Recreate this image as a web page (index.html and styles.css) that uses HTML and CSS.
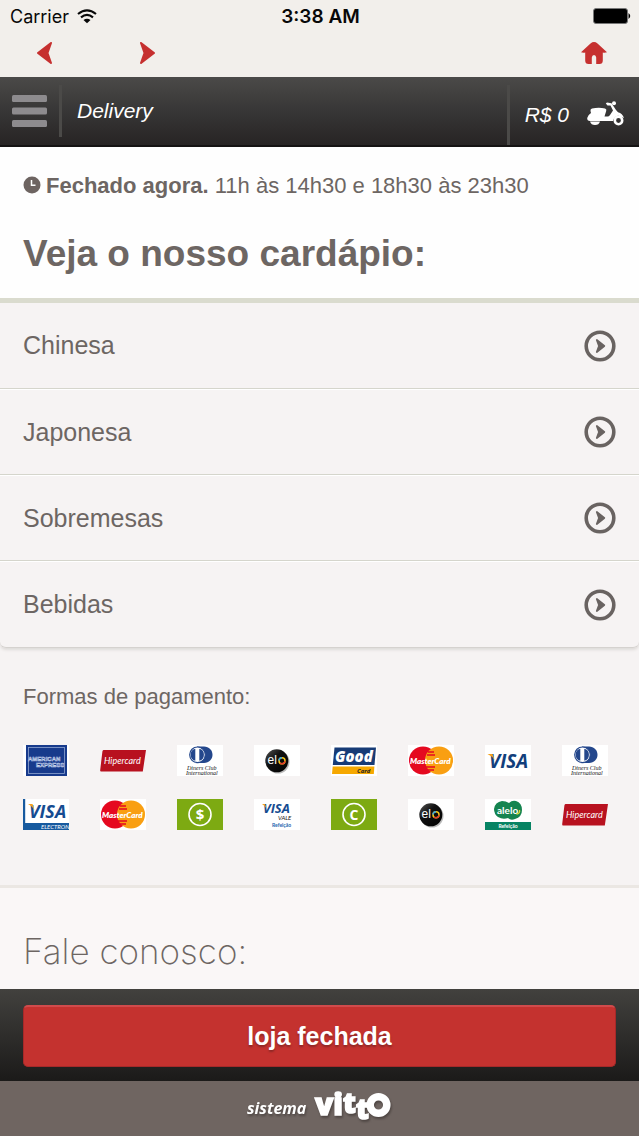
FILE: index.html
```html
<!DOCTYPE html>
<html lang="pt-BR">
<head>
<meta charset="utf-8">
<meta name="viewport" content="width=device-width, initial-scale=1">
<title>Delivery</title>
<link rel="stylesheet" href="styles.css">
</head>
<body>
<header class="browser">
  <div class="status">
    <span class="carrier">Carrier
      <svg width="20" height="15" viewBox="0 0 20 15" aria-hidden="true"><g fill="none" stroke="#080808" stroke-width="2.2"><path d="M1 5Q10-2.2 19 5"/><path d="M4 8.3Q10 3.6 16 8.3"/></g><path d="M6.500 11Q10 8.400 13.500 11L10 14.300Z" fill="#080808"/></svg>
    </span>
    <time>3:38 AM</time>
    <svg class="battery" width="38" height="16" viewBox="0 0 38 16" role="img" aria-label="Bateria"><rect x=".5" y=".5" width="34" height="15" rx="2.5" fill="#000" stroke="#777"/><path d="M35.500 5Q39 8 35.500 11Z" fill="#000"/></svg>
  </div>
  <nav class="tools" aria-label="Navegação">
    <button type="button" aria-label="Voltar"><svg width="16" height="22" viewBox="0 0 16 22"><path d="M14 1L1 11L14 21L10.500 11Z" fill="currentColor" stroke="currentColor" stroke-width="2" stroke-linejoin="round"/></svg></button>
    <button type="button" aria-label="Avançar"><svg width="16" height="22" viewBox="0 0 16 22"><path d="M2 1L15 11L2 21L5.500 11Z" fill="currentColor" stroke="currentColor" stroke-width="2" stroke-linejoin="round"/></svg></button>
    <button class="home" type="button" aria-label="Início"><svg width="26" height="22" viewBox="0 0 26 22"><path d="M0 10.2L9.500 1.500Q13-1.400 16.500 1.500L26 10.200Q24 11 21.800 10.500V18.500Q21.800 22 18.500 22H15.200V15.500Q15 13 13 13T10.800 15.500V22H7.500Q4.200 22 4.200 18.500V10.500Q2 11 0 10.200Z" fill="currentColor"/></svg></button>
  </nav>
</header>

<div class="appbar">
  <button class="menu" type="button" aria-label="Menu"><svg width="35" height="32" viewBox="0 0 35 32"><g fill="#8d8b8e"><rect width="35" height="7" rx="1.5"/><rect y="12.5" width="35" height="7" rx="1.5"/><rect y="25" width="35" height="7" rx="1.5"/></g></svg></button>
  <span class="place">Delivery</span>
  <a class="cart" href="#pedido">R$ 0
    <svg width="37" height="30" viewBox="0 0 37 30" aria-hidden="true">
      <path d="M5 8.500Q12 7.200 18 8.500Q20 9 19.200 11L17.500 16.500H20.500Q22 16.500 23 15L26 10.500L23.500 5.500H20.500L18.800 3.600L20 2.600L24.500 3.200L29 10L31 12.200Q35.500 13.500 37 18L34.500 17Q31 14.500 28.500 17Q26.500 18.500 26 21H3Q0 21 .2 18Q.8 15 4 13L3.500 11Q3 9 5 8.500Z" fill="#fff"/>
      <path d="M3 21.500H13Q12 25 8 25T3 21.500Z" fill="#fff"/>
      <circle cx="31.500" cy="20.500" r="3.700" fill="none" stroke="#fff" stroke-width="2.600"/>
      <circle cx="27" cy="3.200" r="2" fill="#fff"/>
    </svg>
  </a>
</div>

<main>
  <section class="intro">
    <p class="hours"><svg width="18" height="20" viewBox="0 0 18 20" aria-hidden="true"><circle cx="9" cy="9" r="8.500" fill="#6d6461"/><path d="M8.500 4V9.300H12.500" fill="none" stroke="#fff" stroke-width="1.500"/></svg><span><strong>Fechado agora.</strong> 11h às 14h30 e 18h30 às 23h30</span></p>
    <h1>Veja o nosso cardápio:</h1>
  </section>
  <nav class="categories" aria-label="Cardápio">
    <a href="#chinesa">Chinesa<svg aria-hidden="true"><g id="chevron"><circle cx="16" cy="16" r="13.800" fill="none" stroke="currentColor" stroke-width="3.600"/><path d="M12.800 10L20.300 16L12.800 22L15 16Z" fill="currentColor" stroke="currentColor" stroke-width="1.800" stroke-linejoin="round"/></g></svg></a>
    <a href="#japonesa">Japonesa<svg aria-hidden="true"><use href="#chevron"/></svg></a>
    <a href="#sobremesas">Sobremesas<svg aria-hidden="true"><use href="#chevron"/></svg></a>
    <a href="#bebidas">Bebidas<svg aria-hidden="true"><use href="#chevron"/></svg></a>
  </nav>
  <section class="payments">
    <h2>Formas de pagamento:</h2>
    <div class="cards">
      <svg role="img" aria-label="American Express">
        <rect width="46" height="31" fill="#fff"/><rect x="3" width="41" height="31" fill="#173a8c"/>
        <rect x="5.500" y="2.500" width="36" height="26" fill="none" stroke="#8fa5d2" stroke-width=".8"/>
        <text class="logo-sans bold" x="5" y="15.500" font-size="6" fill="#173a8c" stroke="#c8d3ec" stroke-width=".5">AMERICAN</text>
        <text class="logo-sans bold" x="13" y="21.500" font-size="6" fill="#173a8c" stroke="#c8d3ec" stroke-width=".5">EXPRESS</text>
      </svg>
      <svg role="img" aria-label="Hipercard"><g id="hiper">
        <path d="M3.500 5H46L42.800 26.500H1Q0 26.500 .2 25L2.400 6.500Q2.600 5 3.500 5Z" fill="#b8111f"/>
        <text class="logo-lato italic" x="4" y="19" font-size="9" fill="#fff">Hipercard</text>
      </g></svg>
      <svg role="img" aria-label="Diners Club"><g id="diners">
        <rect width="46" height="31" fill="#fff"/>
        <path d="M20 1.500H27C32 1.500 35.500 5.300 35.500 9.800S32 18 27 18H20Z" fill="#24478c"/>
        <circle cx="20.500" cy="9.800" r="7.800" fill="#fff" stroke="#24478c" stroke-width="1.200"/>
        <path d="M18.300 3.800A6.200 6.200 0 0 0 18.300 15.800ZM22.300 3.800A6.200 6.200 0 0 1 22.300 15.800Z" fill="#24478c"/>
        <text class="logo-serif italic" x="10" y="24.500" font-size="6" fill="#111">Diners Club</text>
        <text class="logo-serif italic" x="9" y="29.500" font-size="6" fill="#111">International</text>
      </g></svg>
      <svg role="img" aria-label="Elo"><g id="elo">
        <defs><linearGradient id="elo-shade" x1="0" y1="0" x2="1" y2="1"><stop offset="0" stop-color="#555"/><stop offset=".4" stop-color="#111"/><stop offset="1" stop-color="#000"/></linearGradient></defs>
        <rect width="46" height="31" fill="#fff"/>
        <circle cx="24" cy="17" r="11.500" fill="#bbb"/><circle cx="22.800" cy="15.800" r="11.500" fill="url(#elo-shade)"/>
        <text class="logo-sans" x="13.500" y="19" font-size="12" fill="#fff">el</text>
        <circle cx="28" cy="15.800" r="3" fill="none" stroke="#f5c518" stroke-width="1.500"/>
        <path d="M25 15.500A3 3 0 0 1 28 12.800" fill="none" stroke="#3aa7df" stroke-width="1.500"/>
        <path d="M31 16A3 3 0 0 1 26 18" fill="none" stroke="#e33b2e" stroke-width="1.500"/>
      </g></svg>
      <svg role="img" aria-label="Good Card">
        <rect width="46" height="31" fill="#fff"/>
        <path d="M3.500 2.500H45L43.500 20H1.800Z" fill="#173b76"/><path d="M1.700 21.500H43.400L42.800 29H1Z" fill="#f6a800"/>
        <text class="logo-text heavy italic" x="4" y="16.500" font-size="15" fill="#fff">Good</text>
        <text class="logo-text bold italic" x="26" y="27.700" font-size="6" fill="#222">Card</text>
      </svg>
      <svg role="img" aria-label="MasterCard"><g id="master">
        <rect width="46" height="31" fill="#fff"/>
        <circle cx="15" cy="15.500" r="14" fill="#e50920"/><circle cx="31" cy="15.500" r="14" fill="#f99f12"/>
        <path d="M20 7H26M19 10H27M18 22H27M20 25H26" stroke="#e50920" stroke-width="1.300"/>
        <text class="logo-lato heavy italic" x="2" y="18.500" font-size="8" fill="#fff">MasterCard</text>
      </g></svg>
      <svg role="img" aria-label="Visa">
        <rect width="46" height="31" fill="#fff"/>
        <text class="logo-text bold italic" x="4" y="23" font-size="19" fill="#123f7c">VISA</text>
        <path d="M2.500 9H7.500L9.500 15Q7 11 2.500 9Z" fill="#f4a11d"/>
      </svg>
      <svg role="img" aria-label="Diners Club"><use href="#diners"/></svg>
      <svg role="img" aria-label="Visa Electron">
        <rect width="46" height="31" fill="#fff"/><path d="M0 0H2.200V24H46V31H0Z" fill="#175a9f"/>
        <text class="logo-text bold italic" x="6" y="19" font-size="18" fill="#154b91">VISA</text>
        <path d="M5 5H9.500L11.500 11.500Q9.500 7 5 5Z" fill="#f4a11d"/>
        <text class="logo-lato italic" x="18" y="29.500" font-size="6" fill="#fff">ELECTRON</text>
      </svg>
      <svg role="img" aria-label="MasterCard"><use href="#master"/></svg>
      <svg role="img" aria-label="Dinheiro">
        <rect width="46" height="31" fill="#7daa12"/><circle cx="23" cy="15.500" r="11" fill="none" stroke="#fff" stroke-width="1.600"/>
        <text class="logo-text bold" x="23" y="21" font-size="15" text-anchor="middle" fill="#fff">$</text>
      </svg>
      <svg role="img" aria-label="Visa Vale">
        <rect width="46" height="31" fill="#fff"/>
        <text class="logo-text bold italic" x="9" y="14" font-size="13" fill="#154b91">VISA</text>
        <path d="M8 5H11L12.500 9.500Q11 6.500 8 5Z" fill="#f4a11d"/>
        <text class="logo-lato italic" x="24" y="20.500" font-size="6" fill="#111">VALE</text>
        <text class="logo-lato bold" x="18" y="28" font-size="5" fill="#1b66af">Refeição</text>
      </svg>
      <svg role="img" aria-label="Cheque">
        <rect width="46" height="31" fill="#7daa12"/><circle cx="23" cy="15.500" r="11" fill="none" stroke="#fff" stroke-width="1.600"/>
        <text class="logo-text bold" x="23" y="20.500" font-size="14" text-anchor="middle" fill="#fff">C</text>
      </svg>
      <svg role="img" aria-label="Elo"><use href="#elo"/></svg>
      <svg role="img" aria-label="Alelo">
        <rect width="46" height="31" fill="#fff"/><rect y="23" width="46" height="8" fill="#078363"/>
        <path d="M17 2Q21 2 24 4Q27 1 31 2Q37 4 37 11Q37 18 30 20Q26 22 23 19Q18 21 13 18Q9 15 9 10Q10 3 17 2Z" fill="#158450"/>
        <text class="logo-lato bold" x="12" y="14.500" font-size="10" fill="#fff">alelo</text>
        <path d="M31.500 15A3 3 0 0 0 34.500 11" fill="none" stroke="#d8df36" stroke-width="1.300"/>
        <text class="logo-lato bold" x="23" y="29" font-size="5" text-anchor="middle" fill="#fff">Refeição</text>
      </svg>
      <svg role="img" aria-label="Hipercard"><use href="#hiper"/></svg>
    </div>
  </section>
  <section class="contact"><h2>Fale conosco:</h2></section>
</main>

<footer>
  <div class="action"><button type="button">loja fechada</button></div>
  <div class="brand">
    <svg width="150" height="36" viewBox="0 0 150 36" role="img" aria-label="sistema vitto"><g class="logo-text heavy" fill="#fff"><text class="bold italic" x="2" y="25" font-size="16">sistema</text><g stroke="#fff" stroke-width="1.500"><text x="70" y="26" font-size="30">vi</text><text x="98" y="24" font-size="28">t</text><text x="111" y="30" font-size="28">t</text></g></g><circle cx="133.500" cy="16" r="8.300" fill="none" stroke="#fff" stroke-width="7.500"/></svg>
  </div>
</footer>
</body>
</html>
```
FILE: styles.css
```css
* { box-sizing: border-box; }
body {
  display: flex;
  flex-direction: column;
  height: 100vh;
  margin: 0;
  background: #f6f3f3;
  color: #6d6663;
  font-family: "Liberation Sans", Arial, sans-serif;
}
button { padding: 0; border: 0; background: none; color: inherit; font: inherit; cursor: pointer; }
a { color: inherit; text-decoration: none; }
h1, h2, p { margin: 0; }
svg { display: block; flex: none; }

.browser { flex: none; background: #f2efeb; }
.status {
  display: grid;
  grid-template-columns: 1fr auto 1fr;
  align-items: center;
  height: 32px;
  padding: 0 8px 0 10px;
  color: #080808;
  font: 18px Inter, sans-serif;
}
.status time { font-size: 19px; font-weight: 600; }
.carrier { display: flex; align-items: center; gap: 8px; }
.battery { justify-self: end; }
.tools { display: flex; height: 45px; padding: 10px 32px 0 37px; gap: 86px; color: #c6302f; }
.tools button { height: 22px; }
.tools .home { margin-left: auto; }

.appbar {
  display: flex;
  flex: none;
  align-items: center;
  height: 70px;
  background: linear-gradient(#4b4a48, #393838 45%, #272424);
  border-bottom: 2px solid #151313;
  color: #fff;
  font-size: 21px;
  font-style: italic;
}
.menu { height: 52px; padding: 0 12px; border-right: 3px solid #4b4a48; }
.place { flex: 1; padding-left: 15px; }
.cart {
  display: flex;
  align-self: stretch;
  align-items: center;
  gap: 18px;
  margin-top: 8px;
  padding: 0 15px;
  border-left: 3px solid #4b4a48;
}

main { flex: 1; min-height: 0; overflow: hidden; }
.intro { padding: 24px 23px 22px; background: #fefefe; border-bottom: 5px solid #dadbce; }
.hours { display: flex; align-items: center; gap: 5px; height: 30px; font-size: 22px; }
h1 { margin-top: 31px; font-size: 37px; line-height: 44px; }
.categories {
  border-bottom: 1px solid #d5d2cf;
  border-radius: 0 0 6px 6px;
  box-shadow: 0 2px 3px #dedbd9;
}
.categories a {
  display: flex;
  align-items: center;
  justify-content: space-between;
  height: 86px;
  padding: 0 23px;
  border-bottom: 1px solid #d5d5cc;
  font-size: 25px;
}
.categories a + a { border-top: 1px solid #fff; }
.categories a:last-child { border-bottom: 0; }
.categories svg { width: 32px; height: 32px; color: #696361; }
.payments { padding: 34px 23px 55px; border-bottom: 3px solid #ebe7e3; }
.payments h2 { font-size: 22px; font-weight: 400; line-height: 30px; }
.cards { display: grid; grid-template-columns: repeat(8, 46px); gap: 23px 31px; margin-top: 33px; }
.cards svg { width: 46px; height: 31px; }
.contact { padding: 40px 23px; background: #faf7f7; }
.contact h2 { font: 200 35px/46px Inter, sans-serif; }

footer { flex: none; }
.action { padding: 16px 23px 14px; background: linear-gradient(#42413e, #1b1a19); }
.action button {
  display: block;
  width: 100%;
  height: 62px;
  border: 1px solid #a62929;
  border-top: 2px solid #d04b4c;
  border-radius: 5px;
  background: #c4322f;
  color: #fff;
  font-size: 25px;
  font-weight: 700;
  text-shadow: 0 2px 2px #8e2826;
}
.brand { display: flex; justify-content: center; height: 55px; padding-top: 8px; background: #6f6561; }
.brand svg { filter: drop-shadow(1px 2px 1px #4d4542); }

.logo-text { font-family: "Open Sans", sans-serif; }
.logo-lato { font-family: Lato, sans-serif; }
.logo-sans { font-family: "Liberation Sans", sans-serif; }
.logo-serif { font-family: "Liberation Serif", serif; }
.heavy { font-weight: 800; }
.bold { font-weight: 700; }
.italic { font-style: italic; }
```
